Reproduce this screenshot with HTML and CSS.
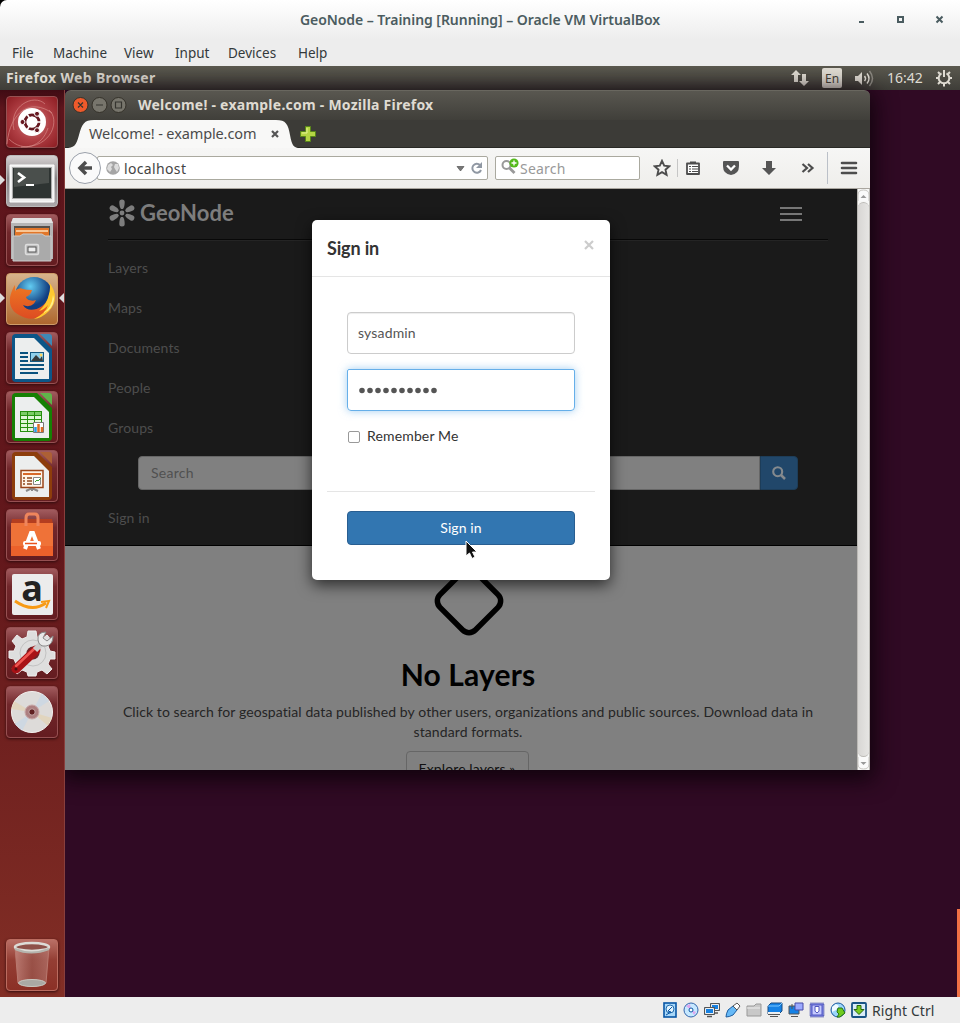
FILE: index.html
```html
<!DOCTYPE html>
<html lang="en">
<head>
<meta charset="utf-8">
<title>GeoNode – Training [Running] – Oracle VM VirtualBox</title>
<link rel="stylesheet" href="styles.css">
</head>
<body>
<div class="host">
  <header class="host-title">
    <span class="host-name">GeoNode – Training [Running] – Oracle VM VirtualBox</span>
    <svg class="host-controls" width="90" height="14" viewBox="0 0 90 14"><path d="M4 9h5" stroke="#4a5c60" stroke-width="2"/><rect x="43" y="4" width="5" height="5" fill="none" stroke="#4a5c60" stroke-width="2"/><path d="M81.500 3.500l6 6M87.500 3.500l-6 6" stroke="#4a5c60" stroke-width="2"/></svg>
  </header>
  <nav class="host-menu"><span class="m-file">File</span><span class="m-machine">Machine</span><span class="m-view">View</span><span class="m-input">Input</span><span class="m-devices">Devices</span><span>Help</span></nav>

  <div class="panel">
    <b class="panel-app">Firefox Web Browser</b>
    <div class="tray">
      <svg width="18" height="18" viewBox="0 0 18 18"><path d="M5 1l5 5H7v7H3V6H0zM13 17l-5-5h3V5h4v7h3z" fill="#dfdbd2"/></svg>
      <span class="lang">En</span>
      <svg width="20" height="18" viewBox="0 0 20 18"><path d="M1 7h3l4-4v13l-4-4H1z" fill="#dfdbd2"/><g fill="none" stroke="#dfdbd2" stroke-width="1.500"><path d="M10.500 7q2 2.500 0 5"/><path d="M13 4.500q4 5 0 10"/><path d="M15.500 2q6 7.500 0 15" stroke="#8b8880"/></g></svg>
      <span class="clock">16:42</span>
      <svg width="18" height="18" viewBox="0 0 18 18"><g fill="none" stroke="#dfdbd2"><path d="M6.500 4.300a5.300 5.300 0 1 0 5 0" stroke-width="2"/><path d="M9 1v7" stroke-width="2"/><path d="M3 3l1.800 1.800M1 9h2M3 15l2-2M9 15v2.500M15 15l-2-2M15 9h2M15 3l-1.800 1.800" stroke-width="2"/></g></svg>
    </div>
  </div>

  <div class="desktop">
    <aside class="launcher">
      <div class="tile dash"><svg viewBox="0 0 52 52"><g fill="none" stroke="#d98d8b" opacity=".65"><path d="M1 48C4 15 25 2 46 17M8 34C2 10 28-3 39 8M15 51C47 52 54 23 43 14M3 43c14 14 33 8 39-11"/></g><circle cx="26" cy="26" r="14" fill="#fff"/><circle cx="26" cy="26" r="7" fill="none" stroke="#661820" stroke-width="3"/><path d="M26 26l9 0M26 26l-5-8M26 26l-5 8" stroke="#fff" stroke-width="1.500"/><circle cx="26" cy="26" r="5.500" fill="#fff"/><g fill="#661820" stroke="#fff"><circle cx="16.500" cy="26" r="2.500"/><circle cx="31" cy="17.800" r="2.500"/><circle cx="31" cy="34.200" r="2.500"/></g></svg></div>
      <div class="tile terminal"><svg viewBox="0 0 52 52"><path d="M4 10h44v37H4z" fill="#eee" stroke="#fff"/><path d="M6 12h40v32H6z" fill="#aaa"/><path d="M7 13h38v30H7z" fill="#2e3432"/><path d="M8 13h35v15L8 32z" fill="#4a4f4c"/><path d="M12 18l6 4.500-6 4.500" fill="none" stroke="#fff" stroke-width="2.700"/><path d="M20 30h8" stroke="#fff" stroke-width="2"/></svg><i class="running"></i></div>
      <div class="tile files"><svg viewBox="0 0 52 52"><path d="M7 4h38l2 5v36H5V9z" fill="#b5b5b5"/><path d="M7 4h38l2 5H5z" fill="#e2e2e2"/><path d="M8 12h36v12H8z" fill="#54504a"/><path d="M9 14h34v8H9z" fill="#e17629"/><path d="M10 17h32" stroke="#ffe0b8" stroke-width="1.500"/><path d="M7 22h7l3-2h19l3 2h6v25H7z" fill="#aaa" stroke="#ccc"/><rect x="19.500" y="30.500" width="13" height="10" rx="1.500" fill="#bbb" stroke="#ddd" stroke-width="1.500"/><rect x="22" y="33" width="8" height="5" fill="#eee" stroke="#555"/></svg></div>
      <div class="tile firefox"><svg viewBox="0 0 52 52"><defs><radialGradient id="globe" cx=".4" cy=".25"><stop stop-color="#62ccf2"/><stop offset="1" stop-color="#123d80"/></radialGradient><linearGradient id="fox" x2="0" y2="1"><stop stop-color="#ef7c23"/><stop offset="1" stop-color="#dd4c22"/></linearGradient></defs><circle cx="28" cy="23" r="19" fill="url(#globe)"/><path d="M43 9q9 16-2 29-13 13-28 4C-1 34 4 20 9 12v6q4-4 8-2 3 1 9 1-1 5-6 7c0 2 5 5 10 3-3 7-9 7-13 5 4 9 22 5 26-9 2-7 3-9 0-14z" fill="url(#fox)"/><path d="M43 9q12 16 0 29-7 7-15 8 12-6 14-14-4 5-9 6 8-7 10-17 2-7 0-12z" fill="#ffc830"/><path d="M47 22q-1 13-10 18 10-3 11-14z" fill="#fff08a"/></svg><i class="running"></i><i class="focused"></i></div>
      <div class="tile"><svg viewBox="0 0 52 52"><path d="M10 2h21l15 15v29q0 4-4 4H10q-4 0-4-4V6q0-4 4-4z" fill="#0c5688"/><path d="M34 2h9q3 0 3 3v9z" fill="#3f88b5"/><path d="M9 6h19l15 15v26H9z" fill="#eceeee"/><path d="M14 21h8M14 25h8M14 29h8M14 33h24M14 37h24M14 41h18" stroke="#0a527e" stroke-width="2"/><rect x="24.500" y="20.500" width="13" height="9" fill="#8fd0ec" stroke="#145981"/><path d="M25 29l5-6 4 4 2-3 1 5z" fill="#353b3c"/><circle cx="35" cy="23" r="1.500" fill="#ffd45c"/></svg></div>
      <div class="tile"><svg viewBox="0 0 52 52"><path d="M10 2h21l15 15v29q0 4-4 4H10q-4 0-4-4V6q0-4 4-4z" fill="#168004"/><path d="M34 2h9q3 0 3 3v9z" fill="#5fb449"/><path d="M9 6h19l15 15v26H9z" fill="#eceeee"/><path d="M14 20h22v21H14z" fill="#dff6d7"/><path d="M14 20h22v4H14z" fill="#7ccc67"/><path d="M14 20.500h22M14 24.500h22M14 28.500h22M14 32.500h22M14 36.500h22M14 40.500h22M14.500 20v21M21.500 20v21M28.500 20v21M35.500 20v21" stroke="#258f0d"/><path d="M27.500 31.500h10v10h-10z" fill="#fff" stroke="#777"/><path d="M32.500 33v8M36 36v5" stroke="#dc6d23" stroke-width="2.500"/><path d="M29.500 36v5" stroke="#259ee4" stroke-width="2.500"/></svg></div>
      <div class="tile"><svg viewBox="0 0 52 52"><path d="M10 2h21l15 15v29q0 4-4 4H10q-4 0-4-4V6q0-4 4-4z" fill="#8d3d0c"/><path d="M34 2h9q3 0 3 3v9z" fill="#ad6035"/><path d="M9 6h19l15 15v26H9z" fill="#eceeee"/><path d="M20 41l6-3 6 3M26 37v4" fill="none" stroke="#888" stroke-width="2"/><path d="M15 20.500h22v17H15z" fill="#fff4e7" stroke="#9a451a" stroke-width="1.500"/><path d="M17 24h18" stroke="#d86929" stroke-width="2"/><path d="M17 28h2M21 28h5M17 31h2M21 31h5M17 34h2M21 34h5" stroke="#8f4820" stroke-width="1.500"/><path d="M27.500 27.500h7v7h-7z" fill="#fff" stroke="#888"/><path d="M29 32l2-2 1 1 3-3" fill="none" stroke="#3a9c32"/></svg></div>
      <div class="tile software"><svg viewBox="0 0 52 52"><path d="M6 10h40l1 5H5z" fill="#b43e20"/><path d="M5 14h42v33H5z" fill="#ef7238"/><path d="M5 37h42v10H5z" fill="#e95420" opacity=".55"/><path d="M20 17V9q0-4 3-4h6q3 0 3 4v8" fill="none" stroke="#ef855c" stroke-width="3"/><path d="M19 40l6-16h2l6 16" fill="none" stroke="#fff" stroke-width="4"/><rect x="17" y="32" width="18" height="5" rx="2" fill="#fff"/><path d="M19 34.500h12" stroke="#e95420" stroke-width="1.500"/></svg></div>
      <div class="tile amazon"><span>a</span><svg viewBox="0 0 52 52"><path d="M9 33q17 12 31 2" fill="none" stroke="#f79a15" stroke-width="2.800"/><path d="M35 34l8-1-3 7" fill="none" stroke="#f79a15" stroke-width="2"/></svg></div>
      <div class="tile"><svg viewBox="0 0 52 52"><path d="M22 4h8l1 6 5 2 5-4 5 6-4 5 2 5 5 1v7h-5l-2 5 4 5-5 5-5-4-5 2-1 4h-8l-1-4-5-2-5 4-5-5 4-5-2-5-5-1v-7h5l2-5-4-5 5-6 5 4 5-2z" fill="#dedede" stroke="#eee"/><circle cx="27" cy="26" r="13" fill="none" stroke="#c2c2c2"/><circle cx="27" cy="26" r="6.500" fill="#6c272b"/><path d="M10 42l20-19" stroke="#a81216" stroke-width="9" stroke-linecap="round"/><path d="M10 39l18-17" stroke="#ef5550" stroke-width="2.500" stroke-linecap="round"/><path d="M29 23l7-7" stroke="#ccc" stroke-width="6"/><path d="M40 5q-9 0-8 8 1 7 8 6 7-1 7-10l-6 5-4-3z" fill="#e9e9e9" stroke="#888"/><circle cx="10" cy="42" r="1.500" fill="#4e1013"/></svg></div>
      <div class="tile"><svg viewBox="0 0 52 52"><circle cx="26" cy="26" r="20.500" fill="#dddbd9" stroke="#f3f1ef"/><path d="M26 26L8 15l-3 8zM26 26l16 14 4-8z" fill="#e7cf9d" opacity=".45"/><path d="M26 26L9 38l7 7zM26 26l10-19 7 8z" fill="#b8d5ef" opacity=".4"/><circle cx="26" cy="26" r="7" fill="#ad7f80" stroke="#c8a7a7"/><circle cx="26" cy="26" r="3.200" fill="#602021" stroke="#c8aaaa"/></svg></div>
      <div class="tile trash"><svg viewBox="0 0 52 52"><defs><linearGradient id="bin"><stop stop-color="#cf9991" stop-opacity=".65"/><stop offset=".5" stop-color="#9d6057" stop-opacity=".55"/><stop offset="1" stop-color="#b98078" stop-opacity=".6"/></linearGradient></defs><path d="M9 8l3 36q14 7 28 0l3-36z" fill="url(#bin)" stroke="#b9796f"/><ellipse cx="26" cy="44" rx="13.500" ry="3.500" fill="#aaa9a4" stroke="#c8c7c0"/><ellipse cx="26" cy="8" rx="17" ry="4" fill="#8e5149" stroke="#dddcd7" stroke-width="2.500"/><path d="M9 10q16 7 34 0" fill="none" stroke="#b5b4ad" stroke-width="2"/></svg></div>
    </aside>

    <section class="browser">
      <div class="titlebar">
        <svg width="56" height="18" viewBox="0 0 56 18"><circle cx="9.500" cy="9" r="7.500" fill="#ee5a2b" stroke="#343129"/><circle cx="28.500" cy="9" r="7.500" fill="#77756c" stroke="#343129"/><circle cx="47.500" cy="9" r="7.500" fill="#77756c" stroke="#343129"/><g fill="none" stroke="#35342f" stroke-width="1.200"><path d="M7 6.500l5 5M12 6.500l-5 5M25 9h7M44.500 6h6v6h-6z"/></g></svg>
        <b>Welcome! - example.com - Mozilla Firefox</b>
      </div>
      <div class="tabs">
        <div class="tab"><svg class="tab-shape" width="235" height="28" viewBox="0 0 235 28"><path d="M0 28c9 0 11-2 14-13C17 4 19 0 29 0h182c10 0 12 4 14 15 2 11 4 13 10 13z" fill="#f8f8f7"/></svg><span>Welcome! - example.com</span><svg class="tab-close" width="8" height="8" viewBox="0 0 8 8"><path d="M1 1l6 6M7 1L1 7" stroke="#555" stroke-width="2.200"/></svg></div>
        <svg class="new-tab" width="18" height="18" viewBox="0 0 18 18"><path d="M6.500 1.500h5v5h5v5h-5v5h-5v-5h-5v-5h5z" fill="#b5d544" stroke="#588719"/><path d="M8 3v5H3" fill="none" stroke="#e5f394"/></svg>
      </div>
      <div class="toolbar">
        <div class="back"><svg width="16" height="16" viewBox="0 0 16 16"><path d="M9 2L3 8l6 6M3 8h12" fill="none" stroke="#4d4d4d" stroke-width="3.500"/></svg></div>
        <div class="address"><svg width="14" height="14" viewBox="0 0 14 14"><circle cx="7" cy="7" r="6.800" fill="#a5a5a5"/><path d="M2 4l3-2 2 2-2 2 1 2-2 3-3-3zM9 3l3 0 1 4-2 4-2-3-1-2z" fill="#ddd"/></svg><span>localhost</span><svg class="reload" width="30" height="14" viewBox="0 0 30 14"><path d="M3 5.500h7L6.500 10z" fill="#777" stroke="#555" stroke-width=".7"/><path d="M26 4a4.500 4.500 0 1 0 1 5" fill="none" stroke="#9098a3" stroke-width="2"/><path d="M28 1v6h-6z" fill="#9098a3"/></svg></div>
        <div class="find"><svg width="19" height="20" viewBox="0 0 19 20"><circle cx="5.500" cy="10" r="4" fill="none" stroke="#999" stroke-width="2"/><path d="M8.500 13l5 5" stroke="#999" stroke-width="2.800"/><circle cx="13" cy="8" r="4.600" fill="#54b91b"/><path d="M13 5.500v5M10.500 8h5" stroke="#fff" stroke-width="1.300"/></svg><span>Search</span></div>
        <div class="tools">
          <svg class="star" width="18" height="18" viewBox="0 0 18 18"><path d="M9 1.800l2.200 4.800 5.200.6-3.900 3.500 1.100 5.200L9 13.200 4.400 15.900l1.100-5.200-3.900-3.500 5.200-.6z" fill="none" stroke="#4d4d4d" stroke-width="1.900"/></svg>
          <i class="divider"></i>
          <svg class="library" width="16" height="16" viewBox="0 0 16 16"><path d="M2 3.500h12v10.500H2z" fill="#fff" stroke="#4d4d4d" stroke-width="1.800" stroke-linejoin="round"/><path d="M5 4V1.500h6V4z" fill="#4d4d4d"/><path d="M4 6.500h2M7 6.500h6M4 9h2M7 9h6M4 11.500h2M7 11.500h6" stroke="#4d4d4d" stroke-width="1.200"/></svg>
          <svg class="pocket" width="18" height="16" viewBox="0 0 18 16"><path d="M2 1h14q1 0 1 1v4q0 8-8 9-8-1-8-9V2q0-1 1-1z" fill="#555"/><path d="M5 5.500l4 4 4-4" fill="none" stroke="#fff" stroke-width="2.300"/></svg>
          <svg class="download" width="16" height="16" viewBox="0 0 16 16"><path d="M5 1h6v7h4l-7 7-7-7h4z" fill="#555"/></svg>
          <svg class="more" width="14" height="12" viewBox="0 0 14 12"><path d="M1.500 2l4.500 4-4.500 4M7 2l4.500 4L7 10" fill="none" stroke="#4d4d4d" stroke-width="2.200"/></svg>
          <i class="divider tall"></i>
          <svg width="18" height="16" viewBox="0 0 18 16"><path d="M2 3h14M2 8h14M2 13h14" stroke="#4d4d4d" stroke-width="2.600" stroke-linecap="round"/></svg>
        </div>
      </div>
      <div class="viewport">
        <main class="page">
          <header class="navbar">
            <div class="navhead"><div class="brand"><svg width="28" height="28" viewBox="0 0 28 28"><g fill="#7d7d7d"><g id="petals"><path d="M11.300 3q0-2.500 2.700-2.500T16.700 3q0 5-1.700 7h-2q-1.700-2-1.700-7z"/><path d="M11.300 25q0 2.500 2.700 2.500t2.700-2.500q0-5-1.700-7h-2q-1.700 2-1.700 7z"/></g><use href="#petals" transform="rotate(63 14 14)"/><use href="#petals" transform="rotate(-63 14 14)"/><circle cx="14" cy="14" r="2.400"/></g></svg><span>GeoNode</span></div><div class="burger"><i></i><i></i><i></i></div></div>
            <nav class="navlinks"><a>Layers</a><a>Maps</a><a>Documents</a><a>People</a><a>Groups</a></nav>
            <div class="site-search"><div class="site-input">Search</div><div class="site-go"><svg width="14" height="14" viewBox="0 0 14 14"><circle cx="5.700" cy="5.700" r="4.500" fill="none" stroke="#858a8e" stroke-width="2.100"/><path d="M9 9l4 4" stroke="#858a8e" stroke-width="2.500"/></svg></div></div>
            <nav class="navlinks last"><a>Sign in</a></nav>
          </header>
          <section class="empty">
            <svg width="74" height="74" viewBox="0 0 74 74"><rect x="12" y="12" width="50" height="50" rx="9" transform="rotate(45 37 37)" fill="none" stroke="#000" stroke-width="5.500"/></svg>
            <h2>No Layers</h2>
            <p>Click to search for geospatial data published by other users, organizations and public sources. Download data in standard formats.</p>
            <a class="explore">Explore layers »</a>
          </section>
        </main>
        <div class="scrollbar"><svg width="11" height="13" viewBox="0 0 11 13"><path d="M0 12V6q0-5 5.500-5T11 6v6" fill="#fafafa" stroke="#c8c6c2"/><path d="M2.500 9h6l-3-3z" fill="#999"/></svg><div class="thumb"></div><svg width="11" height="13" viewBox="0 0 11 13"><path d="M0 0v7q0 5 5.500 5T11 7V0" fill="#fafafa" stroke="#c8c6c2"/><path d="M2.500 5h6l-3 3z" fill="#999"/></svg></div>
        <div class="modal">
          <div class="modal-head"><b>Sign in</b><svg width="10" height="10" viewBox="0 0 10 10"><path d="M1 1l8 8M9 1L1 9" stroke="#ccc" stroke-width="2.200"/></svg></div>
          <div class="modal-body"><div class="field">sysadmin</div><div class="field active"><svg width="80" height="8" viewBox="0 0 80 8"><path d="M4 4.500h73" stroke="#555" stroke-width="5.600" stroke-linecap="round" stroke-dasharray="0 8"/></svg></div><label class="remember"><i></i><span>Remember Me</span></label></div>
          <div class="modal-foot"><div class="submit">Sign in</div></div>
        </div>
        <svg class="cursor" width="14" height="22" viewBox="0 0 14 22"><path d="M1 1v15l3.500-3 2.500 5.500 3-1.500-2.500-5H12z" fill="#111" stroke="#fff"/></svg>
      </div>
    </section>
    <i class="edge"></i>
  </div>

  <footer class="status">
    <svg width="16" height="16" viewBox="0 0 16 16"><rect x="2" y="1" width="12" height="14" fill="#a8d7f8" stroke="#0755a5" stroke-width="1.600"/><circle cx="8" cy="7" r="4" fill="#e1f4ff" stroke="#236cae"/><path d="M10 5l-4 4 3 1-5 3" fill="none" stroke="#0755a5"/></svg>
    <svg width="16" height="16" viewBox="0 0 16 16"><circle cx="8" cy="8" r="7" fill="#c6e8ff" stroke="#3466ad"/><path d="M8 8L3 4l4-2zM8 8l5 2-2 3z" fill="#dda6ee"/><circle cx="8" cy="8" r="2" fill="#fff" stroke="#0755a5"/></svg>
    <svg width="16" height="16" viewBox="0 0 16 16"><path d="M6.500 1.500h9v7h-9z" fill="#1681e2" stroke="#555"/><path d="M7.500 2.500h7v5h-7z" fill="none" stroke="#eee"/><path d="M10 11h4" stroke="#555" stroke-width="1.500"/><path d="M.5 5.500h10v7H.5z" fill="#1681e2" stroke="#555"/><path d="M1.500 6.500h8v5h-8z" fill="none" stroke="#eee"/><path d="M3 14.500h5" stroke="#555" stroke-width="1.500"/></svg>
    <svg width="16" height="16" viewBox="0 0 16 16"><path d="M1 15q0-3 2-7l5-4 4 4-4 5q-4 2-7 2z" fill="#66b9f7" stroke="#1d5c9e"/><path d="M8 4l4-3 3 3-3 4z" fill="#fff" stroke="#555"/></svg>
    <svg width="16" height="16" viewBox="0 0 16 16"><path d="M1 4h7l2-2h5v12H1z" fill="#c8c8c8" stroke="#999"/><path d="M1 6h13" stroke="#eee"/></svg>
    <svg width="16" height="16" viewBox="0 0 16 16"><path d="M1 4l3-3h11v8l-3 3H1z" fill="#1481e5" stroke="#1a4b7f"/><path d="M1 4h11l3-3" fill="none" stroke="#79c7ff"/><path d="M1 11h12" stroke="#eee" stroke-width="2"/><path d="M1 12.500h12M3 14.500h8" stroke="#555"/></svg>
    <svg width="16" height="16" viewBox="0 0 16 16"><path d="M1 4h10v8H1z" fill="#1481e5" stroke="#555"/><path d="M7 1h8v7H7z" fill="#9caaff" stroke="#474ba6"/><path d="M4 2v5M3 14.500h7" stroke="#555"/></svg>
    <svg width="16" height="16" viewBox="0 0 16 16"><rect x="1.500" y="1.500" width="13" height="13" fill="#8893fb" stroke="#4147a6" stroke-dasharray="1 1" stroke-width="2"/><rect x="3" y="3" width="10" height="10" fill="#c4c9ff" stroke="#5056bd"/><path d="M6 4.500V9q2 3.500 4 0V4.500z" fill="#fff" stroke="#5056bd"/></svg>
    <svg width="16" height="16" viewBox="0 0 16 16"><circle cx="8" cy="8" r="7" fill="#9bd5fa" stroke="#18569d"/><path d="M2 5l4-3 3 2-3 4-4 2" fill="#f1faff"/><path d="M8 6h4l3 5-5 4H7l2-3-2-2z" fill="#70cc20" stroke="#287415"/></svg>
    <svg width="16" height="16" viewBox="0 0 16 16"><rect x="1" y="1" width="14" height="14" rx="1" fill="#d9ecf9" stroke="#185385" stroke-width="1.800"/><path d="M6 3.500h4v4h3l-5 5-5-5h3z" fill="#79cc22" stroke="#27660d"/></svg>
    <span>Right Ctrl</span>
  </footer>
</div>
</body>
</html>
```
FILE: styles.css
```css
* { box-sizing: border-box; }
body { margin: 0; font-family: "Noto Sans", "Open Sans", sans-serif; background: #ededed; }
svg { display: block; flex-shrink: 0; }
.host { width: 960px; height: 1023px; display: flex; flex-direction: column; overflow: hidden; background: #000; }
.host-title { height: 40px; flex: none; display: grid; grid-template-columns: 150px 1fr 150px; align-items: center; background: linear-gradient(#fff, #ededed); border-radius: 7px 0 0; }
.host-name { grid-column: 2; text-align: center; font-size: 14px; font-weight: 600; color: #4b5c60; white-space: nowrap; letter-spacing: -.05px; padding-bottom: 1px; }
.host-controls { justify-self: start; margin-left: 45px; }
.host-menu { height: 26px; flex: none; display: flex; align-items: center; padding-left: 12px; font-size: 13.5px; color: #33393b; background: #ededed; }
.host-menu span { white-space: nowrap; }
.m-file { width: 41px; } .m-machine { width: 71px; } .m-view { width: 51px; } .m-input { width: 53px; } .m-devices { width: 70px; }
.panel { height: 24px; flex: none; display: flex; align-items: center; justify-content: space-between; padding: 0 7px 0 6px; color: #dfdbd2; background: linear-gradient(#5b594f, #3e3d38); }
.panel-app { font-size: 14px; letter-spacing: .33px; padding-bottom: 1px; }
.tray { display: flex; align-items: center; }
.lang { width: 20px; height: 20px; margin: 0 12px 0 13px; border-radius: 2px; background: #dfdbd2; color: #454139; font-size: 12px; line-height: 21px; text-align: center; }
.clock { width: 36px; margin: 0 12px 0 13px; padding-bottom: 1px; font-size: 14px; white-space: nowrap; }
.desktop { flex: 1; min-height: 0; display: flex; align-items: flex-start; position: relative; background: #300a24; }
.launcher { width: 65px; height: 907px; z-index: 1; display: flex; flex-direction: column; gap: 7px; padding: 6px; border-right: 1px solid #883f3d; background: linear-gradient(#3f0b13, #5d151c 2%, #62171b 50%, #822e25); }
.tile { width: 52px; height: 52px; flex: none; position: relative; border-radius: 4px; border: 1px solid #965052; background: linear-gradient(#a15b5e, #71272b 35%, #641c20); box-shadow: 0 1px 3px #300c0e; }
.tile > svg { width: 52px; height: 52px; margin: -1px; }
.dash { background: radial-gradient(circle, #cb8788, #b14045 50%, #8c1c22); }
.terminal { background: linear-gradient(#d6d1d2, #898688 45%, #aaa6a8); border-color: #bbb; }
.firefox { background: linear-gradient(#d7b38c, #ae672e); border-color: #ce9c69; }
.amazon { display: grid; place-items: center; }
.amazon::before { content: ""; grid-area: 1 / 1; width: 41px; height: 41px; border-radius: 2px; background: #ececec; }
.amazon span { grid-area: 1 / 1; z-index: 1; margin-top: -13px; font: bold 36px/36px "Open Sans", sans-serif; color: #222; }
.amazon svg { grid-area: 1 / 1; z-index: 1; }
.trash { margin-top: auto; border-color: #bb6c60; background: linear-gradient(#b96f66, #943e34 40%, #8b3026); }
.running, .focused { position: absolute; top: 19px; border: 5px solid transparent; }
.running { left: -7px; border-left-color: #ddd; border-right: 0; }
.focused { right: -7px; border-right-color: #ddd; border-left: 0; }
.browser { width: 805px; height: 680px; display: flex; flex-direction: column; box-shadow: 0 5px 22px 4px #10030c; border-radius: 6px 6px 0 0; }
.titlebar { height: 30px; flex: none; display: flex; align-items: center; gap: 11px; padding: 0 0 2px 6px; border-top: 1px solid #69675f; border-radius: 6px 6px 0 0; color: #dfdbd2; font-size: 14px; letter-spacing: .24px; background: linear-gradient(#595750, #403f3a); }
.tabs { height: 28px; flex: none; display: flex; align-items: center; background: #3c3b37; border-bottom: 1px solid #292925; }
.tab { width: 235px; height: 28px; display: grid; grid-template-columns: 24px 1fr 20px 9px; align-items: center; font-size: 14.5px; letter-spacing: -.12px; color: #4b4b4b; white-space: nowrap; }
.tab-shape { grid-area: 1 / 1 / 2 / 5; }
.tab > span { grid-area: 1 / 2; z-index: 1; padding-bottom: 1px; }
.tab-close { grid-area: 1 / 3; z-index: 1; }
.new-tab { margin-left: -1px; }
.toolbar { height: 41px; flex: none; display: flex; align-items: center; padding-left: 4px; background: linear-gradient(#f6f6f5, #efeeeb); border-bottom: 1px solid #aaa69f; }
.back { width: 32px; height: 32px; flex: none; display: grid; place-items: center; z-index: 1; border: 1px solid #9aa0aa; border-radius: 50%; background: #fafafa; }
.address { width: 391px; height: 24px; flex: none; margin-left: -4px; display: flex; align-items: center; gap: 4px; padding: 0 3px 0 8px; border: 1px solid #aaa99f; border-radius: 2px; background: #fff; color: #444; font-size: 14px; letter-spacing: .35px; }
.reload { margin-left: auto; }
.find { width: 145px; height: 24px; flex: none; margin-left: 7px; display: flex; align-items: center; padding-left: 5px; border: 1px solid #aaa99f; border-radius: 2px; background: #fff; color: #999; font-size: 14px; letter-spacing: .2px; }
.find svg { margin-top: -6px; }
.tools { display: flex; align-items: center; height: 40px; padding-left: 13px; }
.divider { width: 1px; height: 18px; margin: 0 7px 0 6px; background: #c6c6c6; }
.divider.tall { height: 32px; margin: 0 12px; background: #bbc0c8; }
.library { margin-right: 21px; } .pocket { margin-right: 21px; } .download { margin-right: 24px; }
.viewport { height: 581px; flex: none; display: flex; position: relative; overflow: hidden; font-family: Lato, "Noto Sans", sans-serif; font-size: 14px; line-height: 20px; }
.page { width: 792px; height: 581px; overflow: hidden; background: #808080; }
.navbar { height: 357px; padding: 0 29px 0 43px; background: #1a1a1a; border-bottom: 1px solid #000; }
.navhead { height: 51px; display: flex; justify-content: space-between; align-items: center; padding-right: 26px; border-bottom: 1px solid #080808; box-shadow: 0 1px #242424; }
.brand { display: flex; align-items: center; gap: 4px; padding-bottom: 2px; color: #7d7d7d; font-size: 22px; font-weight: 700; letter-spacing: .05px; }
.burger { width: 22px; display: grid; gap: 4px; }
.burger i { height: 2px; background: #777; }
.navlinks { display: flex; flex-direction: column; padding-top: 8px; color: #4d4d4d; letter-spacing: .12px; }
.navlinks a { height: 40px; padding: 10px 0; }
.site-search { height: 34px; margin: 8px 30px 0; display: flex; }
.site-input { flex: 1; padding: 6px 12px; background: #808080; border: 1px solid #666; border-radius: 4px 0 0 4px; color: #505050; letter-spacing: .25px; }
.site-go { width: 38px; display: grid; place-items: center; background: #21476a; border: 1px solid #1d3d59; border-radius: 0 4px 4px 0; }
.empty { display: flex; flex-direction: column; align-items: center; padding: 18px 44px 0 43px; margin-left: 15px; color: #252525; text-align: center; }
.empty > svg { margin-left: 1px; }
.empty h2 { margin: 19px 0 11px; color: #000; font-size: 30px; line-height: 34px; letter-spacing: .15px; }
.empty p { width: 706px; margin: 0; letter-spacing: .09px; }
.explore { width: 123px; height: 34px; flex: none; margin: 9px 2px 0 0; padding-top: 7px; border: 1px solid #666; border-radius: 4px; color: #111; letter-spacing: .1px; }
.scrollbar { width: 13px; height: 581px; display: flex; flex-direction: column; background: #f7f7f6; border: solid #bbb9b5; border-width: 0 1px; }
.thumb { flex: 1; width: 11px; border: 1px solid #bbb9b5; border-width: 1px 0; border-radius: 6px; background: linear-gradient(90deg, #d8d6d4, #e6e5e3); }
.modal { position: absolute; left: 247px; top: 31px; width: 298px; height: 360px; background: #fff; border-radius: 5px; box-shadow: 0 5px 15px #000000aa; color: #333; }
.modal-head { height: 57px; padding: 15px; display: flex; justify-content: space-between; border-bottom: 1px solid #e5e5e5; font-size: 18px; line-height: 26px; letter-spacing: -.15px; }
.modal-head svg { margin-top: 5px; margin-right: 1px; }
.modal-body { height: 170px; padding: 35px 35px 0; }
.field { height: 42px; margin-bottom: 15px; padding: 10px; border: 1px solid #ccc; border-radius: 4px; color: #555; letter-spacing: .15px; box-shadow: inset 0 1px 1px #00000013; }
.field.active { border-color: #66afe9; border-radius: 2px 2px 4px 4px; display: flex; align-items: center; box-shadow: 0 0 8px #66afe999; }
.remember { display: flex; align-items: center; gap: 7px; padding: 0 0 0 1px; letter-spacing: .15px; }
.remember i { width: 12px; height: 12px; margin-top: 2px; border: 1px solid #999; border-radius: 2px; }
.modal-foot { margin: 44px 15px 0; padding: 19px 20px; border-top: 1px solid #e5e5e5; }
.submit { height: 34px; line-height: 32px; text-align: center; color: #fff; border: 1px solid #285e91; border-radius: 4px; background: #3276b1; letter-spacing: .1px; }
.cursor { position: absolute; left: 400px; top: 351px; }
.edge { position: absolute; right: 0; bottom: 0; width: 3px; height: 88px; background: #ef7145; }
.status { height: 26px; flex: none; display: flex; align-items: center; gap: 5px; padding-left: 662px; background: #ededed; color: #33393b; font-size: 14px; letter-spacing: .1px; }
.status span { margin-top: 1px; white-space: nowrap; }
```
